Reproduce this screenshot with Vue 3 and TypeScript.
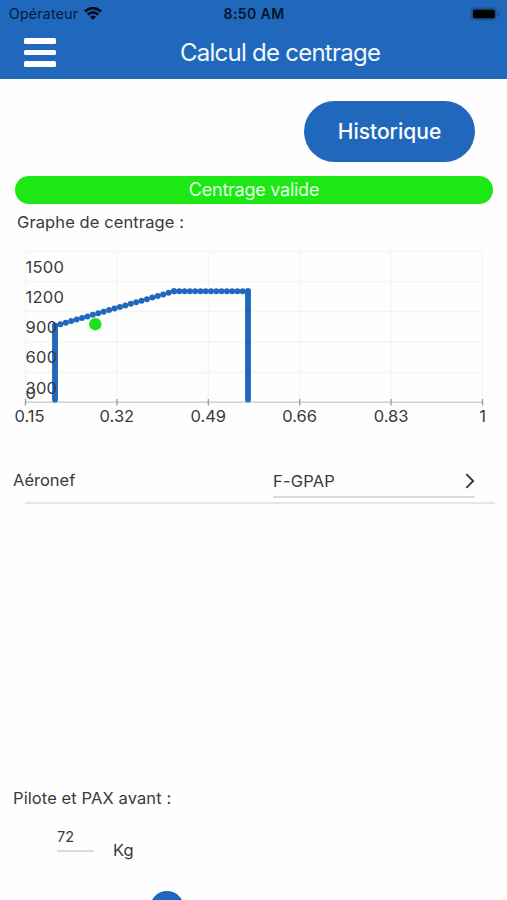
<script setup lang="ts">
import { ref } from 'vue'

interface Point { x: number; y: number }
interface Label extends Point { text: string }

const aircraft = ref('F-GPAP')
const weight = ref('72')

const line = (a: Point, b: Point, steps: number): Point[] =>
  Array.from({ length: steps + 1 }, (_, i) => ({
    x: a.x + ((b.x - a.x) * i) / steps,
    y: a.y + ((b.y - a.y) * i) / steps,
  }))

const envelope: Point[] = [
  ...line({ x: 55, y: 149.5 }, { x: 55, y: 75.8 }, 25),
  ...line({ x: 55, y: 75.8 }, { x: 174, y: 41.3 }, 22),
  ...line({ x: 174, y: 41.3 }, { x: 248, y: 41.3 }, 14),
  ...line({ x: 248, y: 41.3 }, { x: 248, y: 149.5 }, 36),
]
const columns = [25.5, 116.9, 208.3, 299.7, 391.1, 482.5]
const rows = [1.5, 31.8, 61.5, 92, 122.5]
const xLabels: Label[] = ['0.15', '0.32', '0.49', '0.66', '0.83', '1'].map((text, i) => ({
  text,
  x: columns[i] + (i === 0 ? 4 : 0),
  y: 172.2,
}))
const yLabels: Label[] = [
  { text: '1500', x: 25.5, y: 22.7 },
  { text: '1200', x: 25.5, y: 52.9 },
  { text: '900', x: 25.5, y: 83.1 },
  { text: '600', x: 25.5, y: 113.3 },
  { text: '300', x: 25.5, y: 143.5 },
  { text: '0', x: 25.5, y: 148.7 },
]
</script>

<template>
  <main class="screen">
    <header class="header">
      <div class="status">
        <div class="carrier">
          <span class="operator">Opérateur</span>
          <svg class="wifi" viewBox="0 0 18 13">
            <path d="M.9 4.6Q9 -2.4 17.1 4.6" />
            <path d="M3.7 7.6Q9 3.1 14.3 7.6" />
            <path class="solid" d="M5.9 9.7Q9 7.1 12.1 9.7L9 12.8Z" />
          </svg>
        </div>
        <span class="time">8:50 AM</span>
        <svg class="battery" viewBox="0 0 30 14">
          <rect class="shell" x="1" y=".7" width="25.5" height="12.4" rx="3.8" />
          <rect x="3" y="2.8" width="21.8" height="8.4" rx="2" />
          <path class="cap" d="M28 5v4q1.6-.4 1.6-2T28 5Z" />
        </svg>
      </div>
      <div class="bar">
        <button class="menu" type="button" aria-label="Menu"><i></i><i></i><i></i></button>
        <h1 class="title">Calcul de centrage</h1>
      </div>
    </header>

    <div class="actions">
      <button class="history" type="button">Historique</button>
    </div>
    <div class="banner">Centrage valide</div>
    <h2 class="caption">Graphe de centrage :</h2>

    <svg class="chart" viewBox="0 0 507 185">
      <line v-for="y in rows" :key="'r' + y" class="grid" x1="25.5" x2="483" :y1="y" :y2="y" />
      <line v-for="x in columns" :key="'c' + x" class="grid" :x1="x" :x2="x" y1="1" y2="152" />
      <line class="axis" x1="25" x2="483" y1="152.2" y2="152.2" />
      <line v-for="x in columns" :key="'t' + x" class="tick" :x1="x" :x2="x" y1="149" y2="155.5" />
      <g class="envelope">
        <circle v-for="(p, i) in envelope" :key="i" :cx="p.x" :cy="p.y" r="3" />
      </g>
      <circle class="current" cx="95.3" cy="74.2" r="6.2" />
      <text v-for="l in yLabels" :key="l.text" class="value-label" :x="l.x" :y="l.y">{{ l.text }}</text>
      <text v-for="l in xLabels" :key="l.text" class="centered" :x="l.x" :y="l.y">{{ l.text }}</text>
    </svg>

    <section class="aircraft">
      <span class="label">Aéronef</span>
      <button class="select" type="button">
        <span>{{ aircraft }}</span>
        <svg class="chevron" viewBox="0 0 10 16"><path d="M1.3 1.2 8.2 8 1.3 14.8" /></svg>
      </button>
    </section>
    <div class="divider"></div>

    <section class="load">
      <h2 class="load-title">Pilote et PAX avant :</h2>
      <div class="entry">
        <span class="value">{{ weight }}</span>
        <span class="unit">Kg</span>
      </div>
      <div class="slider"><span class="thumb"></span></div>
    </section>
  </main>
</template>

<style>
body { margin: 0; overflow: hidden; background: #fff; }
</style>

<style scoped>
.screen {
  display: flex;
  flex-direction: column;
  width: 507px;
  height: 900px;
  overflow: hidden;
  background: #fefefe;
  color: #3a3a3a;
  font-family: Inter, "Liberation Sans", sans-serif;
  font-size: 16.5px;
}
.screen > * { flex: none; }
button { padding: 0; border: 0; background: none; font: inherit; color: inherit; }
h1, h2 { margin: 0; font-weight: 400; }
.header { height: 79px; background: #2068bc; }
.status {
  display: grid;
  grid-template-columns: 1fr auto 1fr;
  align-items: center;
  height: 27px;
  padding: 0 7px 0 9px;
  color: #051a35;
  font-size: 14px;
}
.carrier { display: flex; align-items: center; gap: 6px; }
.operator { letter-spacing: 0.28px; }
.wifi { width: 18px; height: 13px; fill: none; stroke: #000d20; stroke-width: 2.7; }
.wifi .solid { fill: #000d20; stroke: none; }
.time { margin-right: 1px; color: #03152b; font-weight: 600; letter-spacing: 0.4px; }
.battery { width: 30px; height: 14px; justify-self: end; fill: #000; }
.battery .shell { fill: #18508f; stroke: #1d5aa3; }
.battery .cap { fill: #164b89; }
.bar { display: flex; align-items: center; height: 51px; padding-left: 24px; }
.menu { display: flex; flex-direction: column; gap: 6px; width: 32px; }
.menu i { height: 5.5px; border-radius: 1.5px; background: #fff; }
.title {
  margin-left: 124px;
  color: #f3f8ff;
  font-size: 24px;
  line-height: 30px;
  letter-spacing: -0.75px;
  white-space: nowrap;
}
.actions { display: flex; justify-content: flex-end; padding: 22px 32px 14px 0; }
.history {
  width: 171px;
  height: 61px;
  border-radius: 31px;
  background: #2068bc;
  color: #fff;
  font-size: 21px;
  font-weight: 500;
}
.banner {
  height: 27.5px;
  margin: 0 14px 0 15px;
  border-radius: 14px;
  background: #1de816;
  color: #e4ffe2;
  font-size: 18px;
  line-height: 28.5px;
  letter-spacing: -0.25px;
  text-align: center;
}
.caption { height: 46.5px; padding-left: 17px; font-size: 16.5px; line-height: 37px; letter-spacing: 0.1px; }
.chart { display: block; width: 507px; height: 185px; fill: #3a3a3a; }
.chart text { font-size: 16.5px; }
.chart .value-label { letter-spacing: 0.25px; }
.chart .centered { text-anchor: middle; }
.grid { stroke: #f4f4f4; stroke-width: 1.3; }
.axis { stroke: #cfcfcf; stroke-width: 1.6; }
.tick { stroke: #999; stroke-width: 1.3; }
.envelope { fill: #2068bc; }
.current { fill: #1de01d; }
.aircraft { display: flex; justify-content: space-between; padding: 30px 32px 0 13px; height: 37px; }
.label { line-height: 30px; }
.select {
  display: flex;
  align-items: center;
  justify-content: space-between;
  width: 202px;
  height: 33px;
  padding-top: 1px;
  border-bottom: 2px solid #dcdcdc;
  letter-spacing: 0.2px;
}
.chevron { width: 10px; height: 16px; fill: none; stroke: #333; stroke-width: 1.8; }
.divider { height: 2px; margin: 0 12px 0 25px; background: #e6e6e6; }
.load { padding-top: 284px; }
.load-title { padding-left: 13px; font-size: 16.5px; line-height: 20px; letter-spacing: 0.1px; }
.entry { display: flex; align-items: flex-start; gap: 19px; padding: 17px 0 0 57px; height: 48px; }
.value { width: 37px; height: 25px; border-bottom: 2px solid #dcdcdc; font-size: 14.5px; line-height: 23px; }
.unit { margin-top: 15px; line-height: 20px; font-size: 16.5px; }
.slider { padding: 18px 0 0 150px; }
.thumb { display: block; width: 34px; height: 34px; border-radius: 50%; background: #2068bc; }
</style>
